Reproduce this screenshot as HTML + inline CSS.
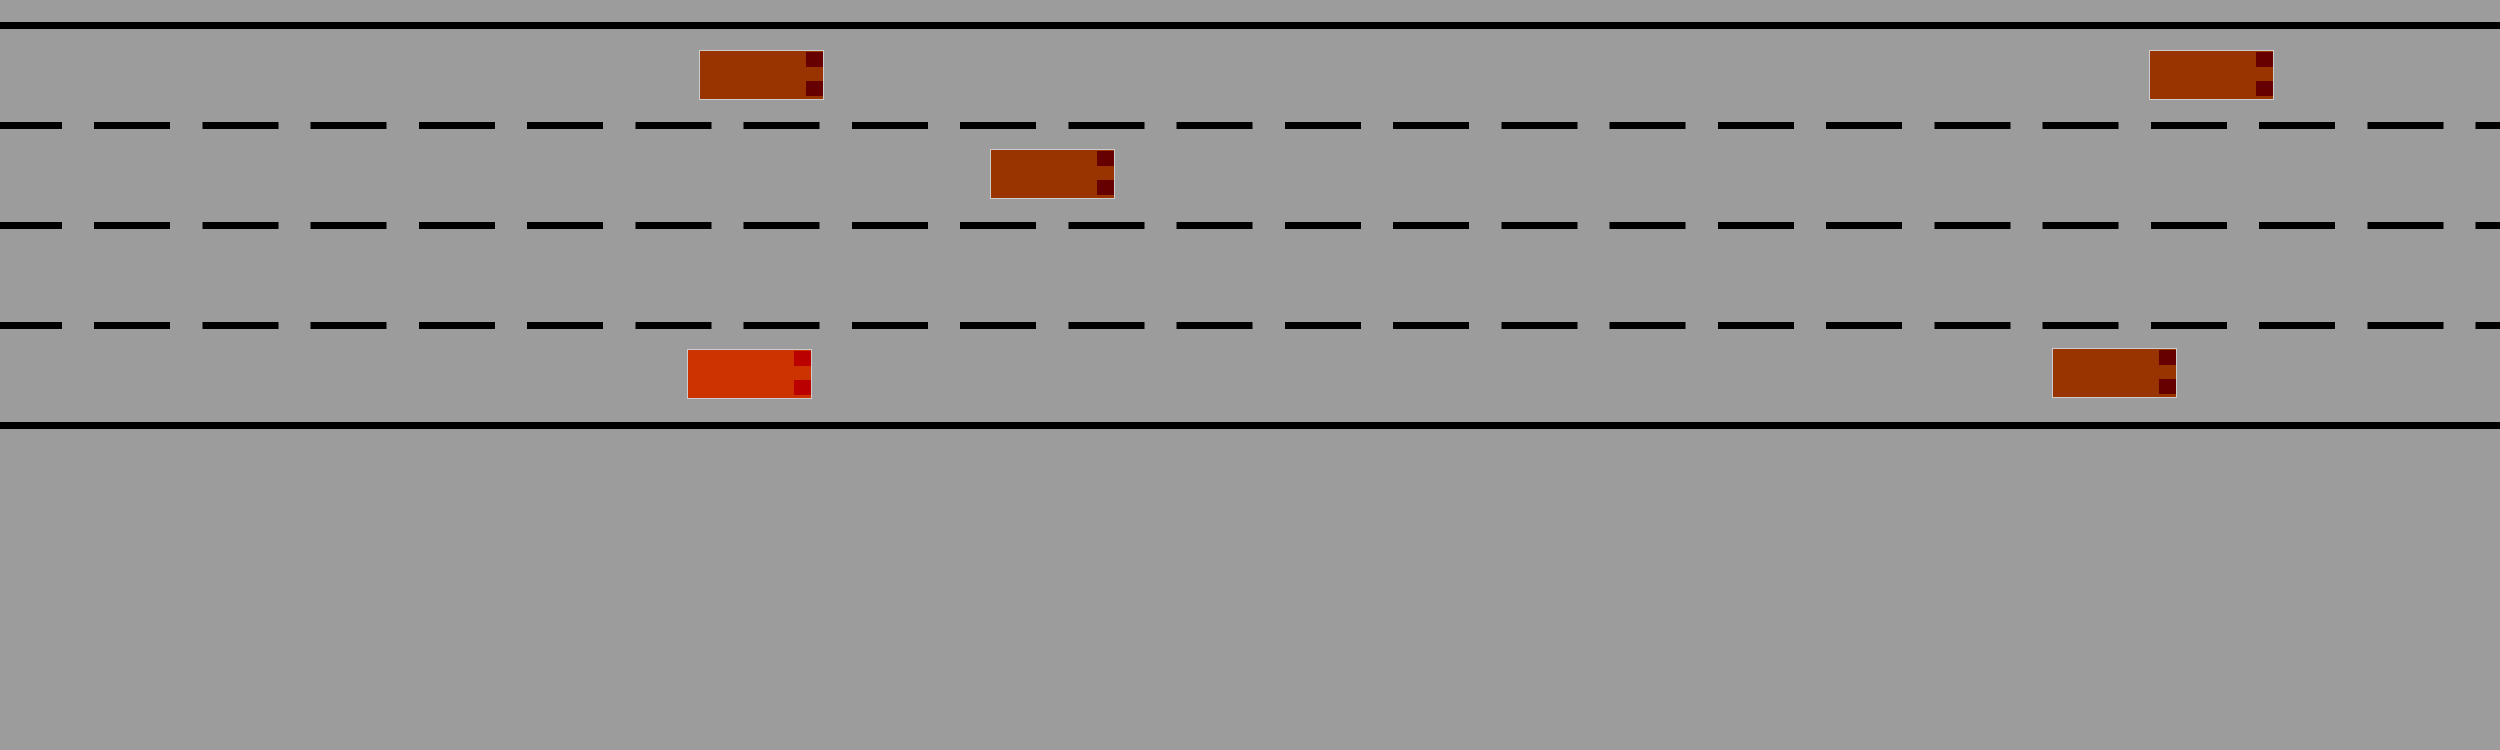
<!DOCTYPE html>
<html><head><style>html,body{margin:0;padding:0;background:#9c9c9c;}svg{display:block}</style></head><body>
<svg width="2500" height="750" xmlns="http://www.w3.org/2000/svg" shape-rendering="crispEdges">
<rect width="2500" height="750" fill="#9c9c9c"/>
<rect x="0" y="22" width="2500" height="7" fill="#000"/>
<rect x="0" y="422" width="2500" height="7" fill="#000"/>
<g stroke="#000" stroke-width="7" stroke-dasharray="76 32.25" stroke-dashoffset="14.25">
<line x1="0" y1="125.5" x2="2500" y2="125.5"/>
<line x1="0" y1="225.5" x2="2500" y2="225.5"/>
<line x1="0" y1="325.5" x2="2500" y2="325.5"/>
</g>
<defs>
<g id="car"><rect x="0.5" y="0.5" width="124" height="49" fill="#993300" stroke="#cccccc" stroke-width="1"/><rect x="107" y="2" width="17" height="15" fill="#660000"/><rect x="107" y="31" width="17" height="15" fill="#660000"/></g>
</defs>
<use href="#car" x="699" y="50"/>
<use href="#car" x="990" y="149"/>
<use href="#car" x="2149" y="50"/>
<use href="#car" x="2052" y="348"/>
<g transform="translate(687,349)"><rect x="0.5" y="0.5" width="124" height="49" fill="#cc3300" stroke="#cccccc" stroke-width="1"/><rect x="107" y="2" width="17" height="15" fill="#bb0000"/><rect x="107" y="31" width="17" height="15" fill="#bb0000"/></g>
</svg>
</body></html>
